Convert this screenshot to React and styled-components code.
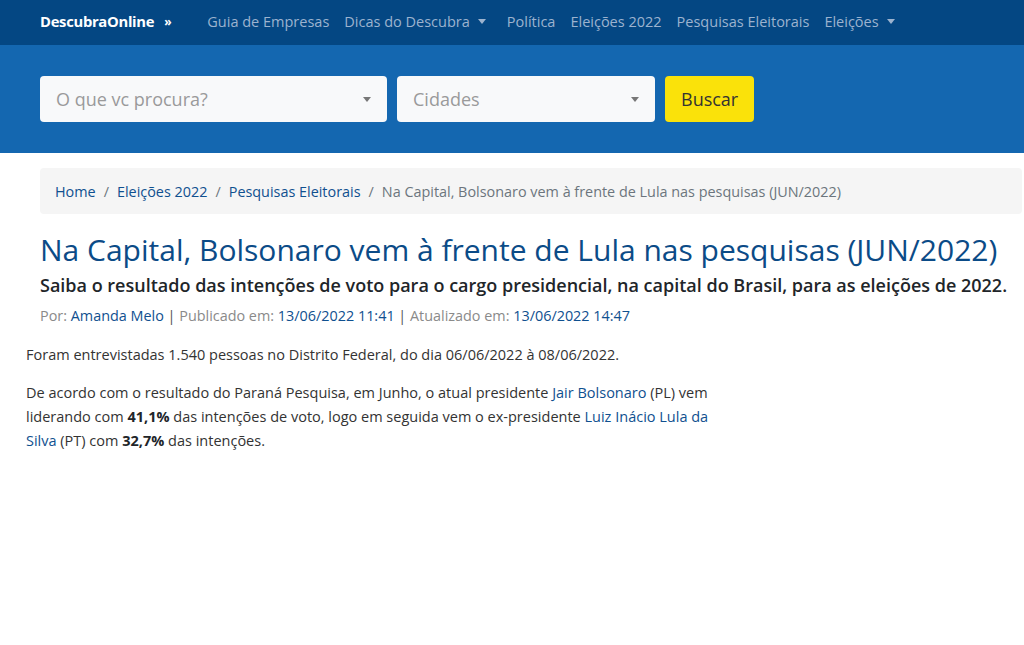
import React from 'react';
import styled, { createGlobalStyle } from 'styled-components';

const GlobalStyle = createGlobalStyle`
  body {
    margin: 0;
    font-family: "Open Sans", "Noto Sans", sans-serif;
    background: #fff;
    color: #212529;
  }
  * { box-sizing: border-box; }
`;

const Navbar = styled.nav`
  height: 45px;
  background: #044783;
  display: flex;
  align-items: center;
  padding: 0 0 3px 40px;
`;

const Brand = styled.a`
  color: #fff;
  font-weight: 700;
  font-size: 14.8px;
  letter-spacing: -0.3px;
  margin-right: 36px;
  display: flex;
  align-items: center;
  gap: 10px;
  span { font-size: 12px; }
`;

const NavLinks = styled.ul`
  display: flex;
  list-style: none;
  margin: 0;
  padding: 0;
  gap: 15px;
`;

const NavItem = styled.li`
  color: #9cb3cf;
  font-size: 14.5px;
  display: flex;
  align-items: center;
  margin-right: ${p => (p.dropdown ? '6px' : '0')};
`;

const Caret = styled.span`
  display: inline-block;
  width: 0;
  height: 0;
  margin-left: 8px;
  border-left: 4px solid transparent;
  border-right: 4px solid transparent;
  border-top: 5px solid ${p => p.color || 'currentColor'};
`;

const SearchBand = styled.section`
  height: 108px;
  background: #1467b0;
  display: flex;
  align-items: center;
  padding: 0 40px;
  gap: 10px;
`;

const SelectBox = styled.div`
  width: ${p => p.width}px;
  height: 46px;
  background: #f8f9fa;
  border-radius: 4px;
  display: flex;
  align-items: center;
  justify-content: space-between;
  padding: 0 16px;
  color: #9a9a9a;
  font-size: 18px;
`;

const Button = styled.button`
  height: 46px;
  padding: 0 16px;
  background: #fae20a;
  border: none;
  border-radius: 4px;
  font-family: inherit;
  font-size: 18px;
  color: #333;
`;

const Main = styled.main`
  padding: 15px 0 0 40px;
`;

const Breadcrumb = styled.ol`
  display: flex;
  list-style: none;
  margin: 0;
  height: 46px;
  align-items: center;
  padding: 0 15px;
  background: #f5f5f5;
  border-radius: 4px;
  margin-right: 2px;
  font-size: 14.4px;
`;

const Crumb = styled.li`
  color: ${p => (p.active ? '#6c757d' : '#10508f')};
  &:not(:first-child)::before {
    content: "/";
    color: #6c757d;
    padding: 0 8px;
  }
`;

const Title = styled.h1`
  margin: 18px 0 0;
  font-size: 30px;
  font-weight: 500;
  color: #0b4b87;
  line-height: 1.2;
`;

const Subtitle = styled.h2`
  margin: 5px 0 0;
  font-size: 18px;
  font-weight: 600;
  color: #212529;
  line-height: 1.4;
`;

const Meta = styled.p`
  margin: 8px 0 0;
  font-size: 14.4px;
  color: #8a8a8a;
  a { color: #10508f; }
`;

const Sep = styled.span`
  color: #555;
`;

const Article = styled.article`
  padding: 18px 0 0 26px;
  width: 720px;
  font-size: 14.5px;
  line-height: 24px;
  color: #333;
  p { margin: 0 0 14px; }
  a { color: #10508f; }
  b { font-weight: 700; color: #212529; }
`;

export default function App() {
  return (
    <>
      <GlobalStyle />
      <Navbar>
        <Brand>DescubraOnline <span>»</span></Brand>
        <NavLinks>
          <NavItem>Guia de Empresas</NavItem>
          <NavItem dropdown>Dicas do Descubra<Caret /></NavItem>
          <NavItem>Política</NavItem>
          <NavItem>Eleições 2022</NavItem>
          <NavItem>Pesquisas Eleitorais</NavItem>
          <NavItem dropdown>Eleições<Caret /></NavItem>
        </NavLinks>
      </Navbar>
      <SearchBand>
        <SelectBox width={347}>O que vc procura?<Caret color="#777" /></SelectBox>
        <SelectBox width={258}>Cidades<Caret color="#777" /></SelectBox>
        <Button>Buscar</Button>
      </SearchBand>
      <Main>
        <Breadcrumb>
          <Crumb>Home</Crumb>
          <Crumb>Eleições 2022</Crumb>
          <Crumb>Pesquisas Eleitorais</Crumb>
          <Crumb active>Na Capital, Bolsonaro vem à frente de Lula nas pesquisas (JUN/2022)</Crumb>
        </Breadcrumb>
        <Title>Na Capital, Bolsonaro vem à frente de Lula nas pesquisas (JUN/2022)</Title>
        <Subtitle>Saiba o resultado das intenções de voto para o cargo presidencial, na capital do Brasil, para as eleições de 2022.</Subtitle>
        <Meta>
          Por: <a>Amanda Melo</a> <Sep>|</Sep> Publicado em: <a>13/06/2022 11:41</a> <Sep>|</Sep> Atualizado em: <a>13/06/2022 14:47</a>
        </Meta>
      </Main>
      <Article>
        <p>Foram entrevistadas 1.540 pessoas no Distrito Federal, do dia 06/06/2022 à 08/06/2022.</p>
        <p>
          De acordo com o resultado do Paraná Pesquisa, em Junho, o atual presidente <a>Jair Bolsonaro</a> (PL) vem
          liderando com <b>41,1%</b> das intenções de voto, logo em seguida vem o ex-presidente <a>Luiz Inácio Lula da
          Silva</a> (PT) com <b>32,7%</b> das intenções.
        </p>
      </Article>
    </>
  );
}
